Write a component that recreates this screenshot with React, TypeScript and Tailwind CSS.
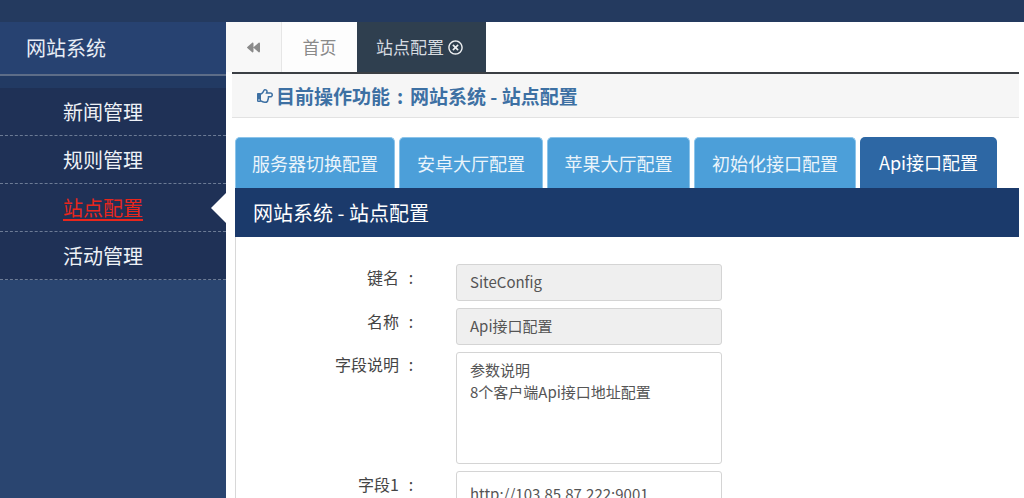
import { FaBackward, FaRegHandPointRight, FaRegTimesCircle } from "react-icons/fa";

const font = "font-['Microsoft_YaHei','Noto_Sans_CJK_SC',sans-serif]";

const menus = ["新闻管理", "规则管理", "站点配置", "活动管理"];
const tabs = ["服务器切换配置", "安卓大厅配置", "苹果大厅配置", "初始化接口配置", "Api接口配置"];
const tabWidths = ["w-[160px]", "w-[144px]", "w-[143px]", "w-[162px]", "w-[137px]"];

function Label({ text, pad }: { text: string; pad: string }) {
  return (
    <div className={`flex justify-end text-[16px] text-[#444] ${pad}`}>
      <span>{text}</span>
      <span className="inline-block w-[24px] text-center">:</span>
    </div>
  );
}

export default function App() {
  return (
    <div className={`flex h-[498px] w-[1024px] flex-col overflow-hidden bg-white ${font}`}>
      <div className="h-[22px] shrink-0 bg-[#243a5f]" />
      <div className="flex flex-1">
        <aside className="flex w-[226px] shrink-0 flex-col bg-[#2a4570]">
          <div className="flex h-[52px] items-center bg-[#274271] pl-[26px] text-[20px] text-[#e8edf5]">
            网站系统
          </div>
          <div className="h-[2px] bg-[#5d6d88]" />
          <div className="h-[12px] bg-[#223a63]" />
          {menus.map((m) => {
            const active = m === "站点配置";
            return (
              <div
                key={m}
                className="relative flex h-[48px] items-center border-b border-dashed border-[#6c7b95] bg-[#1f3156] pl-[63px] text-[20px]"
              >
                <span className={active ? "text-[#e8261c] underline underline-offset-[3px]" : "text-[#eef1f6]"}>{m}</span>
                {active ? (
                  <span className="absolute right-0 top-1/2 h-0 w-0 -translate-y-1/2 border-y-[15px] border-r-[15px] border-y-transparent border-r-white" />
                ) : null}
              </div>
            );
          })}
        </aside>

        <main className="flex flex-1 flex-col">
          <div className="flex h-[50px] shrink-0 items-stretch bg-white">
            <div className="flex w-[56px] items-center justify-center border-r border-[#e6e6e6] bg-[#f8f8f8] text-[#8a8a8a]">
              <FaBackward className="h-[13px] w-[13px]" />
            </div>
            <div className="flex w-[75px] items-center justify-center bg-[#fdfdfd] text-[17px] text-[#8a8a8a]">首页</div>
            <div className="flex w-[129px] items-center gap-[4px] bg-[#2f3f4f] pl-[19px] text-[17px] text-[#d6dbe0]">
              站点配置
              <FaRegTimesCircle className="h-[15px] w-[15px] text-[#eef0f2]" />
            </div>
          </div>

          <div className="flex flex-1 flex-col pl-[6px] pr-[5px]">
            <div className="flex h-[46px] items-center border-t-2 border-b border-t-[#3b3f44] border-b-[#e2e2e2] bg-[#f6f6f6] pl-[25px] pt-[1px] text-[19px] font-bold text-[#3d70a3]">
              <FaRegHandPointRight className="mr-[3px] h-[16px] w-[16px]" />
              <span>目前操作功能</span>
              <span className="inline-block w-[20px] text-center">:</span>
              <span>网站系统 - 站点配置</span>
            </div>

            <div className="flex items-end gap-[4px] pl-[3px] pt-[19px]">
              {tabs.map((t, i) => (
                <div
                  key={t}
                  className={`flex h-[51px] ${tabWidths[i]} items-center justify-center rounded-t-[5px] text-[18px] ${
                    i === 4 ? "bg-[#2d67a4] text-white" : "border-t border-x border-[#8cc4ea] bg-[#4c9fd9] text-[#eaf4fb]"
                  }`}
                >
                  {t}
                </div>
              ))}
            </div>

            <div className="ml-[3px] flex h-[49px] items-center bg-[#1b3a6b] pl-[18px] text-[20px] text-white">
              网站系统 - 站点配置
            </div>

            <div className="ml-[3px] flex-1 border-l border-[#d8d8d8] pt-[27px]">
              <div className="grid grid-cols-[187px_266px] gap-x-[33px] gap-y-[7px] text-[15px]">
                <Label text="键名" pad="pt-[1px]" />
                <div className="flex h-[37px] items-center rounded-[3px] border border-[#d4d4d4] bg-[#efefef] px-[13px] text-[#555]">
                  SiteConfig
                </div>

                <Label text="名称" pad="pt-[1px]" />
                <div className="flex h-[37px] items-center rounded-[3px] border border-[#d4d4d4] bg-[#efefef] px-[13px] text-[#555]">
                  Api接口配置
                </div>

                <Label text="字段说明" pad="pt-[0px]" />
                <div className="h-[112px] rounded-[3px] border border-[#d4d4d4] bg-white px-[13px] pt-[6px] text-[15px] leading-[22px] text-[#555]">
                  <div>参数说明</div>
                  <div>8个客户端Api接口地址配置</div>
                </div>

                <Label text="字段1" pad="pt-[1px]" />
                <div className="flex h-[37px] items-end rounded-[3px] border border-[#d4d4d4] bg-white px-[13px] pb-[2px] text-[#555]">
                  http://103.85.87.222:9001
                </div>
              </div>
            </div>
          </div>
        </main>
      </div>
    </div>
  );
}
